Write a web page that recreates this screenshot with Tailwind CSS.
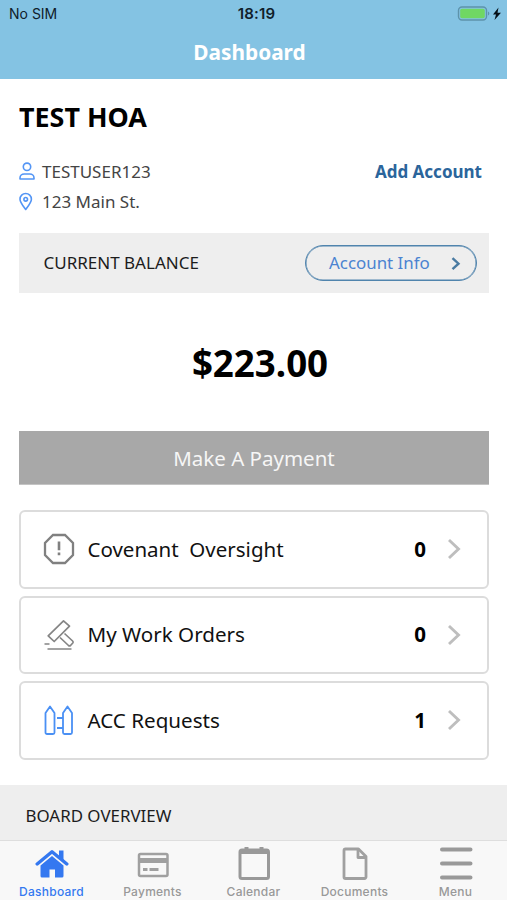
<!DOCTYPE html>
<html lang="en">
<head>
<meta charset="utf-8">
<title>Dashboard</title>
<script src="https://cdn.jsdelivr.net/npm/@tailwindcss/browser@4"></script>
</head>
<body class="w-[507px] h-[900px] overflow-hidden bg-white font-['Noto_Sans',sans-serif] text-black flex flex-col whitespace-nowrap">
<header class="h-[79px] shrink-0 bg-[#84c3e3]">
  <div class="h-[27px] grid grid-cols-3 items-center pl-[9px] pr-2 font-['Inter',sans-serif] text-[#10202a]">
    <span class="text-[14px]">No SIM</span>
    <span class="text-center font-semibold text-[15px] pl-[5px] pt-px tracking-[0.2px]">18:19</span>
    <svg class="justify-self-end -mr-[4px]" width="46" height="18" viewBox="0 0 46 18" fill="none">
      <rect x="1.500" y="2" width="28" height="13" rx="3.500" stroke="#5d93ab" stroke-width="1.400"/>
      <rect x="3.200" y="3.700" width="24.600" height="9.600" rx="1.800" fill="#70d763"/>
      <path d="M31 6.500c1.800.7 1.800 3.300 0 4z" fill="#5d93ab"/>
      <path d="M41.500 2.500L36 9.500H39L37.500 15L44 7.700H40.500Z" fill="#071018"/>
    </svg>
  </div>
  <h1 class="h-[50px] leading-[50px] pr-[8px] text-center text-[20.8px] font-bold text-white">Dashboard</h1>
</header>
<main class="h-[761px] shrink-0 flex flex-col">
  <div class="pl-[19px] pr-[18px] flex flex-col">
    <h2 class="mt-[18px] h-10 leading-10 text-[26.900px] font-bold">TEST HOA</h2>
    <div class="mt-[20px] h-[30px] flex items-center justify-between text-[17px] text-[#444]">
      <div class="flex items-center gap-[7px]">
        <svg width="16" height="20" viewBox="0 0 16 20" fill="none" stroke="#5395f5" stroke-width="1.600"><circle cx="8" cy="4.800" r="3.700"/><path d="M1 17v-1c0-2.400 1.900-4 4.200-4h5.600c2.300 0 4.200 1.600 4.200 4v1z" stroke-linejoin="round"/></svg>
        <span>TESTUSER123</span>
      </div>
      <a class="pr-[7px] font-bold text-[#2b659b]">Add Account</a>
    </div>
    <div class="h-[30px] flex items-center gap-[7px] text-[17px] text-[#444]">
      <svg width="16" height="20" viewBox="0 0 16 20" fill="none" stroke="#5395f5" stroke-width="1.600"><path d="M6.700 17.500C4.500 14.500 1 10.300 1 7.200a5.700 5.700 0 0 1 11.400 0c0 3.100-3.500 7.300-5.700 10.300z" stroke-linejoin="round"/><circle cx="6.700" cy="7.300" r="1.800"/></svg>
      <span>123 Main St.</span>
    </div>
    <section class="mt-4 h-[60px] bg-[#eee] flex items-center justify-between pl-[24.500px] pr-3">
      <span class="text-[17px] text-[#1c1c1c]">CURRENT BALANCE</span>
      <a class="w-[172px] h-9 rounded-full border border-[#5084ad] shadow-[inset_0_0_0_0.500px_#5084ad] flex items-center justify-between pl-[23px] pr-[15px] text-[16.900px] text-[#4b83d1]">Account Info
        <svg class="mt-0.5" width="11" height="14" viewBox="0 0 11 14" fill="none" stroke="#4a7ba2" stroke-width="2.400"><path d="M2.500 1.200L8.500 6.700L2.500 12.200"/></svg>
      </a>
    </section>
    <div class="h-[138px] leading-[140px] text-center pl-3 text-[36.700px] font-bold">$223.00</div>
    <button class="h-[54px] bg-[#a8a8a8] border-b border-[#c4c4c4] pt-px text-[20.500px] text-[#f6f6f6]">Make A Payment</button>
    <div class="mt-[25px] flex flex-col gap-[7px]">
      <a class="h-[78.500px] rounded-[6px] border-2 border-[#dcdcdc] flex items-center pl-[22px] pr-[25px]">
        <svg class="w-[32px] h-[32px]" viewBox="0 0 32 32" fill="none" stroke="#808080" stroke-width="2.300"><path d="M10 2h12l8 8v12l-8 8H10l-8-8V10z"/><path d="M16 8.500v8.700M16 19.500v2.800" stroke-width="2.600"/></svg>
        <span class="ml-[12.500px] text-[20.500px] whitespace-pre text-[#111]">Covenant  Oversight</span>
        <b class="ml-auto text-[20.500px]">0</b>
        <svg class="ml-5" width="16" height="22" viewBox="0 0 16 22" fill="none" stroke="#bebebe" stroke-width="2.900"><path d="M3 2l9.500 9-9.500 9"/></svg>
      </a>
      <a class="h-[78.500px] rounded-[6px] border-2 border-[#dcdcdc] flex items-center pl-[22px] pr-[25px]">
        <svg class="w-[32px] h-[32px]" viewBox="0 0 32 32" fill="none" stroke="#858585" stroke-width="1.700" stroke-linejoin="round"><path d="M20.500 1.800l6 5.400L11.200 22.500l-6-5.700z"/><path d="M17 18.500l8.500 8q1 .8 2 0l2.300-2.500q.8-1-.2-2L21.500 14.500"/><path d="M1.500 25h5M4.500 30h24"/></svg>
        <span class="ml-[12.500px] text-[20.600px] text-[#111]">My Work Orders</span>
        <b class="ml-auto text-[20.500px]">0</b>
        <svg class="ml-5" width="16" height="22" viewBox="0 0 16 22" fill="none" stroke="#bebebe" stroke-width="2.900"><path d="M3 2l9.500 9-9.500 9"/></svg>
      </a>
      <a class="h-[78.500px] rounded-[6px] border-2 border-[#dcdcdc] flex items-center pl-[22px] pr-[25px]">
        <svg class="w-[32px] h-[32px]" viewBox="0 0 32 32" fill="none" stroke="#4a90f4" stroke-width="1.800" stroke-linejoin="round"><path d="M2.500 9L7 2.500l4.500 6.500v19.500a1.500 1.500 0 0 1-1.500 1.500H4a1.500 1.500 0 0 1-1.500-1.500zM20 9l4.500-6.500L29 9v19.500a1.500 1.500 0 0 1-1.500 1.500h-6a1.500 1.500 0 0 1-1.500-1.500zM14 14h6M14 24h6"/></svg>
        <span class="ml-[12.500px] text-[20.600px] text-[#111]">ACC Requests</span>
        <b class="ml-auto text-[20.500px]">1</b>
        <svg class="ml-5" width="16" height="22" viewBox="0 0 16 22" fill="none" stroke="#bebebe" stroke-width="2.900"><path d="M3 2l9.500 9-9.500 9"/></svg>
      </a>
    </div>
  </div>
  <section class="mt-[25.500px] flex-1 bg-[#eee] pl-[25.500px] pt-[16px] text-[16.900px] leading-[30px] text-[#1c1c1c]">BOARD OVERVIEW</section>
</main>
<nav class="h-[60px] shrink-0 border-t border-[#dedede] bg-[#f8f8f8] grid grid-cols-5 px-[1px] text-center font-['Inter',sans-serif] text-[12px] font-medium tracking-[0.25px] leading-[18px] text-[#999]">
  <a class="flex flex-col items-center text-[#3478f0]">
    <svg width="34" height="42" viewBox="0 0 34 42" fill="#3478f0"><path d="M24 9.500h4.500v10L24 15.500z"/><path d="M2.200 23L17 10.700L31.800 23" fill="none" stroke="#3478f0" stroke-width="3.400" stroke-linecap="round" stroke-linejoin="round"/><path d="M17 15L28.500 24.500v10.500a1.500 1.500 0 0 1-1.500 1.500H20v-8h-5.500v8H7A1.500 1.500 0 0 1 5.500 35V24.500z"/></svg>
    <span>Dashboard</span></a>
  <a class="flex flex-col items-center">
    <svg width="34" height="42" viewBox="0 0 34 42" fill="none" stroke="#a0a0a0" stroke-width="2.500"><rect x="3" y="13" width="28.500" height="22" rx="1.500"/><path d="M3 19.500h28.500" stroke-width="5"/><path d="M7 28.500h4.500M13.500 28.500h9" stroke-width="3"/></svg>
    <span>Payments</span></a>
  <a class="flex flex-col items-center">
    <svg width="34" height="42" viewBox="0 0 34 42" fill="none" stroke="#999" stroke-width="3"><rect x="3" y="9" width="28.500" height="28.500" rx="2"/><path d="M3 10.500h28.500" stroke-width="5"/><path d="M7.500 7h4M22.500 7h4" stroke-width="2"/></svg>
    <span>Calendar</span></a>
  <a class="flex flex-col items-center">
    <svg width="34" height="42" viewBox="0 0 34 42" fill="none" stroke="#a0a0a0" stroke-width="2.800" stroke-linejoin="round"><path d="M7.500 8h13l7.500 7.500V36a1.500 1.500 0 0 1-1.500 1.500h-19A1.500 1.500 0 0 1 6 36V9.500A1.500 1.500 0 0 1 7.500 8z"/><path d="M20 8.500v8h8"/></svg>
    <span>Documents</span></a>
  <a class="flex flex-col items-center">
    <svg width="34" height="42" viewBox="0 0 34 42" fill="none" stroke="#999" stroke-width="4" stroke-linecap="round"><path d="M3 8.500h28.500M3 22.500h28.500M3 36.500h28.500"/></svg>
    <span>Menu</span></a>
</nav>
</body>
</html>
